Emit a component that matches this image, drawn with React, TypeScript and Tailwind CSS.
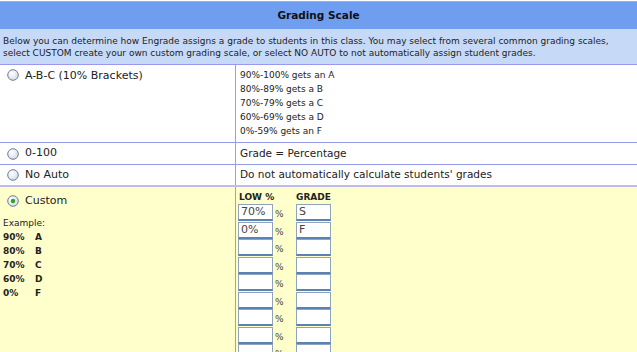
import React from 'react';

const font = { fontFamily: '"DejaVu Sans", Verdana, sans-serif' };

function Radio({ checked }: { checked?: boolean }) {
  return (
    <svg width="12" height="12" viewBox="0 0 12 12" className="shrink-0">
      <defs>
        <radialGradient id={checked ? 'rg1' : 'rg0'} cx="0.4" cy="0.35" r="0.7">
          <stop offset="0" stopColor="#ffffff" />
          <stop offset="1" stopColor="#d4dae3" />
        </radialGradient>
      </defs>
      <circle cx="6" cy="6" r="5.3" fill={`url(#${checked ? 'rg1' : 'rg0'})`} stroke="#6d7f95" strokeWidth="1" />
      {checked && <circle cx="6" cy="6" r="2.2" fill="#2ea12e" />}
    </svg>
  );
}

const brackets = [
  '90%-100% gets an A',
  '80%-89% gets a B',
  '70%-79% gets a C',
  '60%-69% gets a D',
  '0%-59% gets an F',
];

const example = [
  ['90%', 'A'],
  ['80%', 'B'],
  ['70%', 'C'],
  ['60%', 'D'],
  ['0%', 'F'],
];

const custom = [
  ['70%', 'S'],
  ['0%', 'F'],
  ['', ''],
  ['', ''],
  ['', ''],
  ['', ''],
  ['', ''],
  ['', ''],
  ['', ''],
];

export default function App() {
  return (
    <div className="w-[637px] h-[352px] overflow-hidden bg-white text-[#222] flex flex-col" style={font}>
      <div className="mt-[1px] border-t border-[#a3a3f2] flex flex-col flex-1 min-h-0">
        <div className="h-[27px] bg-[#6f9ef1] flex items-center justify-center text-[10.5px] font-bold text-[#111]">
          Grading Scale
        </div>
        <div className="bg-[#c6daf8] border-b border-[#9898ec] px-[3px] pt-[6px] pb-[5px] text-[9px] leading-[12px] text-[#222] whitespace-nowrap">
          Below you can determine how Engrade assigns a grade to students in this class. You may select from several common grading scales,
          <br />
          select CUSTOM create your own custom grading scale, or select NO AUTO to not automatically assign student grades.
        </div>

        <div className="grid grid-cols-[235px_1fr] border-b border-[#9898ec]">
          <div className="flex items-start gap-[6px] pl-[7px] pt-[4px] text-[11px] leading-[14px]">
            <Radio />
            <span>A-B-C (10% Brackets)</span>
          </div>
          <div className="border-l border-[#9b9be6] pl-[4px] pt-[3px] pb-[4px] text-[9px] leading-[14px]">
            {brackets.map(b => (
              <div key={b}>{b}</div>
            ))}
          </div>
        </div>

        <div className="grid grid-cols-[235px_1fr] h-[22px] border-b border-[#9898ec]">
          <div className="flex items-center gap-[6px] pl-[7px] text-[11px]">
            <Radio />
            <span>0-100</span>
          </div>
          <div className="border-l border-[#9b9be6] pl-[4px] flex items-center text-[10.5px]">Grade = Percentage</div>
        </div>

        <div className="grid grid-cols-[235px_1fr] h-[22px] border-b-2 border-[#bcbcf0]">
          <div className="flex items-center gap-[6px] pl-[7px] text-[11px]">
            <Radio />
            <span>No Auto</span>
          </div>
          <div className="border-l border-[#9b9be6] pl-[4px] flex items-center text-[10.5px]">
            Do not automatically calculate students' grades
          </div>
        </div>

        <div className="grid grid-cols-[235px_1fr] bg-[#ffffcc] flex-1 min-h-0 overflow-hidden">
          <div>
            <div className="flex items-center gap-[6px] pl-[7px] pt-[6px] text-[11px]">
              <Radio checked />
              <span>Custom</span>
            </div>
            <div className="pl-[3px] pt-[6px] text-[9px] leading-[14px]">
              <div>Example:</div>
              {example.map(([p, g]) => (
                <div key={p} className="flex font-bold">
                  <span className="w-[32px]">{p}</span>
                  <span>{g}</span>
                </div>
              ))}
            </div>
          </div>
          <div className="border-l border-[#9b9be6] pl-[2px] pt-[5px]">
            <div className="flex text-[9px] font-bold leading-[11px] pl-[1px]">
              <span className="w-[57px]">LOW %</span>
              <span>GRADE</span>
            </div>
            <div className="flex flex-col mt-[1px]">
              {custom.map(([p, g], i) => (
                <div key={i} className="flex items-start h-[17.5px]">
                  <div className="w-[35px] h-[17px] bg-white border border-[#8fa3bb] border-b-2 border-b-[#5a82b4] px-[2px] text-[11px] leading-[14px] text-[#444]">
                    {p}
                  </div>
                  <span className="w-[23px] pl-[2px] pt-[5px] text-[9px] leading-[11px] text-[#444]">%</span>
                  <div className="w-[35px] h-[17px] bg-white border border-[#8fa3bb] border-b-2 border-b-[#5a82b4] px-[2px] text-[11px] leading-[14px] text-[#444]">
                    {g}
                  </div>
                </div>
              ))}
            </div>
          </div>
        </div>
      </div>
    </div>
  );
}
